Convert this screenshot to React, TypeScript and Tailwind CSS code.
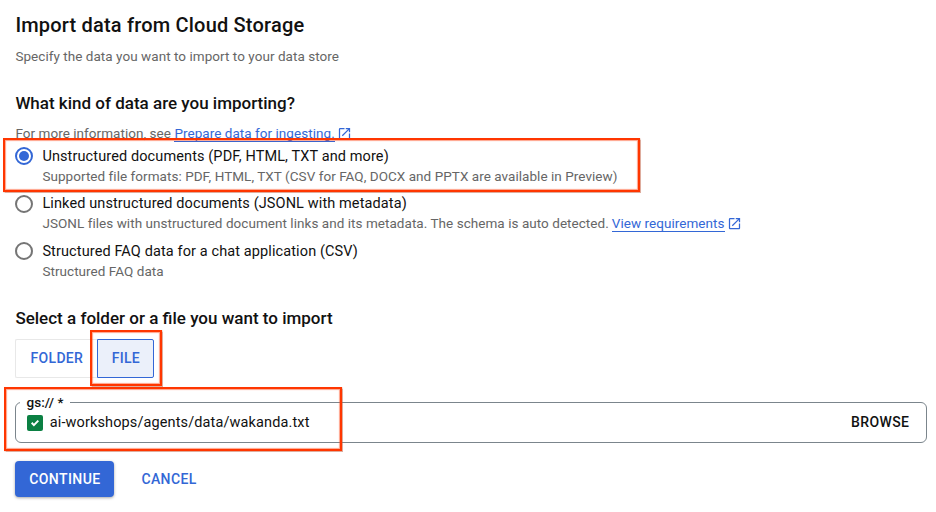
import type { ReactNode } from "react";
import { MdOpenInNew } from "react-icons/md";

function ExternalLink({ children }: { children: ReactNode }) {
  return (
    <a className="inline-flex items-center text-[#3367d6]">
      <span className="h-[18px] border-b border-[#3367d6] leading-[18px]">{children}</span>
      <MdOpenInNew className="ml-[2px] size-[15px]" />
    </a>
  );
}

function RadioOption({ label, detail, checked = false }: {
  label: string;
  detail: ReactNode;
  checked?: boolean;
}) {
  return (
    <div className="flex h-[47.5px] gap-[9px]">
      <span className={`mt-[0.5px] flex size-[18px] shrink-0 items-center justify-center rounded-full border-2 ${checked ? "border-[#3367d6]" : "border-[#757575]"}`}>
        {checked && <span className="size-[10px] rounded-full bg-[#3367d6]" />}
      </span>
      <div className="whitespace-nowrap">
        <div className="h-5 text-[14.5px] leading-5 tracking-[0.11px] text-[#111]">{label}</div>
        <div className="-mt-px flex h-5 items-center text-[13.5px] leading-5 tracking-[0.045px] text-[#666]">{detail}</div>
      </div>
    </div>
  );
}

function Highlight({ className }: { className: string }) {
  return <div className={`pointer-events-none absolute border-2 border-[#ff3600] shadow-[0_0_1px_0.5px_rgba(190,90,60,0.5),inset_0_0_1px_1px_rgba(255,70,20,0.5)] ${className}`} />;
}

export default function App() {
  return (
    <main className="relative h-[512px] w-[936px] overflow-hidden bg-white pl-[15.4px] pt-[10px] font-['Roboto',sans-serif] text-[#111]">
      <h1 className="h-[30px] text-[20px] font-medium leading-[30px] tracking-[0.19px]"><span>Import data from Cloud Storage</span></h1>
      <p className="mt-[6px] h-5 text-[13.5px] leading-5 tracking-[0.045px] text-[#666]"><span>Specify the data you want to import to your data store</span></p>
      <h2 className="mt-[27px] h-5 text-[17px] font-medium leading-5"><span>What kind of data are you importing?</span></h2>
      <p className="mt-[10px] flex h-5 items-center whitespace-pre text-[13.5px] tracking-[0.045px] text-[#666]">
        <span>For more information, see </span>
        <ExternalLink>Prepare data for ingesting.</ExternalLink>
      </p>
      <div className="mt-[3.5px] h-[142.5px]">
        <RadioOption
          checked
          label="Unstructured documents (PDF, HTML, TXT and more)"
          detail="Supported file formats: PDF, HTML, TXT (CSV for FAQ, DOCX and PPTX are available in Preview)"
        />
        <RadioOption
          label="Linked unstructured documents (JSONL with metadata)"
          detail={<><span className="mr-[3px]">JSONL files with unstructured document links and its metadata. The schema is auto detected.</span><ExternalLink>View requirements</ExternalLink></>}
        />
        <RadioOption
          label="Structured FAQ data for a chat application (CSV)"
          detail="Structured FAQ data"
        />
      </div>
      <h2 className="mt-[19px] h-5 text-[17px] font-medium leading-5"><span>Select a folder or a file you want to import</span></h2>
      <div className="mt-[11px] flex h-[39px] text-[14px] font-medium tracking-[0.3px] text-[#3367d6]">
        <button className="flex w-[82px] items-center justify-center rounded-l-[2px] border border-r-0 border-[#e8e8e8]">FOLDER</button>
        <button className="flex w-[57px] items-center justify-center rounded-r-[2px] border border-[#3367d6] bg-[#ebf0fa]">FILE</button>
      </div>
      <div className="relative mt-[24px] flex h-[41px] w-[912px] items-center rounded-[6px] border border-[#7b858c] pl-[10.4px] pr-[17px]">
        <span className="absolute left-[4px] top-[-11px] bg-white px-[6px] text-[13.5px] font-medium leading-5 tracking-[0.1px]">gs:// *</span>
        <span className="flex size-4 items-center justify-center rounded-[2px] bg-[#0b8043]">
          <svg viewBox="0 0 16 16" className="size-4 fill-none stroke-white stroke-[2]"><path d="m4.7 7.8 2.2 2.3 4.4-4.5" /></svg>
        </span>
        <span className="ml-[7px] text-[14.5px] leading-5 tracking-[0.12px]">ai-workshops/agents/data/wakanda.txt</span>
        <button className="ml-auto text-[14px] font-medium tracking-[0.4px]">BROWSE</button>
      </div>
      <div className="mt-[18px] flex h-9 text-[14px] font-medium tracking-[0.4px]">
        <button className="w-[99px] rounded-[4px] bg-[#3367d6] text-white shadow-[0_1px_3px_rgba(0,0,0,0.35)]">CONTINUE</button>
        <button className="ml-[27px] text-[#3367d6]">CANCEL</button>
      </div>
      <Highlight className="left-[3px] top-[138px] h-[54px] w-[637px]" />
      <Highlight className="left-[90px] top-[330px] h-[56px] w-[72px]" />
      <Highlight className="left-[4px] top-[387px] h-[64px] w-[338px]" />
    </main>
  );
}
